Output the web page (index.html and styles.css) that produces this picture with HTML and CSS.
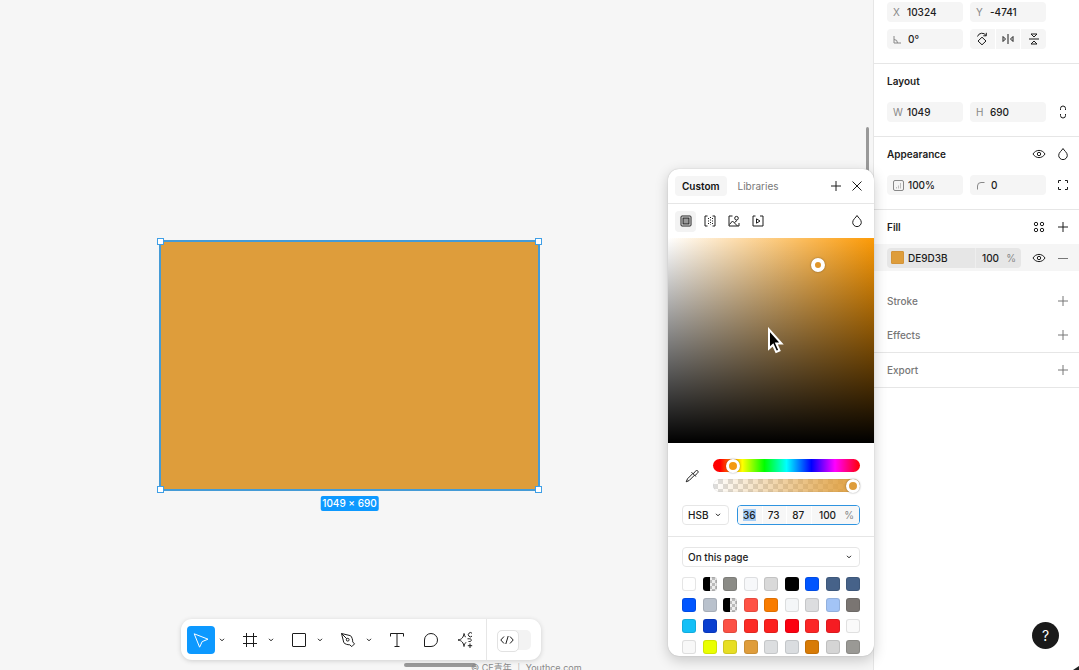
FILE: index.html
```html
<!doctype html>
<html lang="en">
  <head>
    <meta charset="UTF-8" />
    <meta name="viewport" content="width=device-width, initial-scale=1.0" />
    <title>Design Editor</title>
    <link rel="stylesheet" href="styles.css">
  </head>
  <body>
    <main class="canvas">
      <div class="shape">
        <span class="handle tl"></span>
        <span class="handle tr"></span>
        <span class="handle bl"></span>
        <span class="handle br"></span>
        <span class="size-badge">1049 × 690</span>
      </div>

      <div class="scroll-y"></div>
      <div class="scroll-x"></div>
      <p class="credit">© CE青年 ｜ Youthce.com</p>

      <nav class="toolbar" aria-label="Tools">
        <div class="tool-group">
          <button class="tool active" aria-label="Move">
            <svg width="18" height="18" viewBox="0 0 18 18"><path d="M2.2 2.8 16 8.2l-5.800 2.400-2.600 5.600z" /></svg>
          </button>
          <button class="more" aria-label="More move tools"><svg width="6" height="4" viewBox="0 0 6 4"><path d="m1 .8 2 2 2-2" /></svg></button>
        </div>
        <div class="tool-group">
          <button class="tool" aria-label="Frame">
            <svg width="16" height="16" viewBox="0 0 16 16"><path d="M4.500 1v14M11.500 1v14M1 4.500h14M1 11.500h14" /></svg>
          </button>
          <button class="more" aria-label="More frame tools"><svg width="6" height="4" viewBox="0 0 6 4"><path d="m1 .8 2 2 2-2" /></svg></button>
        </div>
        <div class="tool-group">
          <button class="tool" aria-label="Rectangle">
            <svg width="16" height="16" viewBox="0 0 16 16"><rect x="1.500" y="1.500" width="13" height="13" rx=".5" /></svg>
          </button>
          <button class="more" aria-label="More shapes"><svg width="6" height="4" viewBox="0 0 6 4"><path d="m1 .8 2 2 2-2" /></svg></button>
        </div>
        <div class="tool-group">
          <button class="tool" aria-label="Pen">
            <svg width="16" height="16" viewBox="0 0 16 16"><path d="m1.500 1.500 9 2.200c1.600 1.600 2.200 3.800 2.200 6.200l1.800 2-2.700 2.700-2-1.800c-2.400 0-4.600-.6-6-2.200zM1.500 1.500l5.300 5.300" /><circle cx="7.700" cy="7.700" r="1.400" /></svg>
          </button>
          <button class="more" aria-label="More drawing tools"><svg width="6" height="4" viewBox="0 0 6 4"><path d="m1 .8 2 2 2-2" /></svg></button>
        </div>
        <div class="tool-group plain">
          <button class="tool" aria-label="Text">
            <svg width="16" height="16" viewBox="0 0 16 16"><path d="M1.500 4.500v-3h13v3M8 1.500v13M5.500 14.500h5" /></svg>
          </button>
          <button class="tool" aria-label="Comment">
            <svg width="16" height="16" viewBox="0 0 16 16"><path d="M1.500 14.500V8A6.500 6.500 0 1 1 8 14.500z" /></svg>
          </button>
          <button class="tool" aria-label="Actions">
            <svg width="18" height="18" viewBox="0 0 18 18"><path d="M9.500 6.200C8.700 5.200 8.500 4 8 2.500 7.500 6 6 8.500 2 9c4 .5 5.500 3 6 6.500.3-1.800.8-3 2-4.200" /><path d="M16 2.300a2.100 2.100 0 1 0 0 2.800M11.500 7.800h2.300c2 0 2 2.700 0 2.700h-1.300M14 12.500v4.500M11.800 14.700h4.400" /></svg>
          </button>
        </div>
        <label class="dev-mode">
          <input type="checkbox" aria-label="Dev Mode">
          <svg width="14" height="10" viewBox="0 0 14 10"><path d="M4 1.500.8 5 4 8.500M10 1.500 13.200 5 10 8.500M8.200 1 5.800 9" /></svg>
        </label>
      </nav>
    </main>

    <aside class="sidebar">
      <section class="section position">
        <div class="fields">
          <label class="field"><span>X</span><input value="10324" aria-label="X position"></label>
          <label class="field"><span>Y</span><input value="-4741" aria-label="Y position"></label>
        </div>
        <div class="fields">
          <label class="field">
            <svg width="9" height="9" viewBox="0 0 9 9"><path d="M1 1v7h7M1 4.500a3.500 3.500 0 0 1 3.500 3.500" /></svg>
            <input value="0°" aria-label="Rotation">
          </label>
          <div class="button-group">
            <button aria-label="Rotate 90 degrees"><svg width="12" height="14" viewBox="0 0 12 14"><path d="M1.500 4.500a4.700 4.700 0 0 1 8.500-1M10.300.8v3H7.300M6 5.200l4 3.800-4 3.800L2 9z" /></svg></button>
            <button aria-label="Flip horizontal"><svg width="12" height="12" viewBox="0 0 12 12"><path d="M6 1v10M1 3.500v5L3.500 6zM11 3.500v5L8.500 6z" /></svg></button>
            <button aria-label="Flip vertical"><svg width="12" height="12" viewBox="0 0 12 12"><path d="M1 6h10M3 1h6L6 4zM3 11h6L6 8z" /></svg></button>
          </div>
        </div>
      </section>

      <section class="section">
        <header><h2>Layout</h2></header>
        <div class="fields">
          <label class="field"><span>W</span><input value="1049" aria-label="Width"></label>
          <label class="field"><span>H</span><input value="690" aria-label="Height"></label>
          <button class="icon" aria-label="Lock aspect ratio"><svg width="12" height="14" viewBox="0 0 12 14"><path d="M3.500 5V3.500a2.500 2.500 0 0 1 5 0V5M3.500 9v1.500a2.500 2.500 0 0 0 5 0V9" /></svg></button>
        </div>
      </section>

      <section class="section">
        <header>
          <h2>Appearance</h2>
          <button class="icon" aria-label="Toggle visibility"><svg width="14" height="14" viewBox="0 0 14 14"><path d="M1 7c2.800-4.800 9.200-4.800 12 0-2.800 4.800-9.200 4.800-12 0z" /><circle cx="7" cy="7" r="1.700" /></svg></button>
          <button class="icon" aria-label="Blend mode"><svg width="12" height="14" viewBox="0 0 12 14"><path d="M6 1.500C5 3.500 1.700 5.500 1.700 8.300a4.300 4.300 0 0 0 8.600 0C10.300 5.500 7 3.500 6 1.500z" /></svg></button>
        </header>
        <div class="fields">
          <label class="field">
            <svg width="11" height="11" viewBox="0 0 11 11"><rect x=".5" y=".5" width="10" height="10" rx="1.500" /><path d="M3.500 8.500V7M5.500 8.500v-3M7.500 8.500V3" stroke-opacity=".5" /></svg>
            <input value="100%" aria-label="Opacity">
          </label>
          <label class="field">
            <svg width="9" height="9" viewBox="0 0 9 9"><path d="M1.500 8.500V5A3.500 3.500 0 0 1 5 1.500h3.500" /></svg>
            <input value="0" aria-label="Corner radius">
          </label>
          <button class="icon" aria-label="Individual corners"><svg width="12" height="12" viewBox="0 0 12 12"><path d="M1.500 4V1.500H4M8 1.500h2.500V4M10.500 8v2.500H8M4 10.500H1.500V8" /></svg></button>
        </div>
      </section>

      <section class="fill">
        <header>
          <h2>Fill</h2>
          <button class="icon" aria-label="Styles"><svg width="12" height="12" viewBox="0 0 12 12"><circle cx="3" cy="3" r="1.700" /><circle cx="9" cy="3" r="1.700" /><circle cx="3" cy="9" r="1.700" /><circle cx="9" cy="9" r="1.700" /></svg></button>
          <button class="icon" aria-label="Add fill"><svg width="12" height="12" viewBox="0 0 12 12"><path d="M6 1v10M1 6h10" /></svg></button>
        </header>
        <div class="fill-row">
          <div class="paint">
            <button class="chip" aria-label="Fill color"></button>
            <input class="hex" value="DE9D3B" aria-label="Hex">
            <label class="opacity"><input value="100" aria-label="Fill opacity"><span>%</span></label>
          </div>
          <button class="icon" aria-label="Hide fill"><svg width="14" height="14" viewBox="0 0 14 14"><path d="M1 7c2.800-4.800 9.200-4.800 12 0-2.800 4.800-9.200 4.800-12 0z" /><circle cx="7" cy="7" r="1.700" /></svg></button>
          <button class="icon remove" aria-label="Remove fill"><svg width="12" height="12" viewBox="0 0 12 12"><path d="M1 6.500h10" /></svg></button>
        </div>
      </section>

      <section class="empty">
        <h2>Stroke</h2>
        <button class="icon" aria-label="Add stroke"><svg width="12" height="12" viewBox="0 0 12 12"><path d="M6 1v10M1 6h10" /></svg></button>
      </section>
      <section class="empty ruled">
        <h2>Effects</h2>
        <button class="icon" aria-label="Add effect"><svg width="12" height="12" viewBox="0 0 12 12"><path d="M6 1v10M1 6h10" /></svg></button>
      </section>
      <section class="empty ruled">
        <h2>Export</h2>
        <button class="icon" aria-label="Add export"><svg width="12" height="12" viewBox="0 0 12 12"><path d="M6 1v10M1 6h10" /></svg></button>
      </section>

      <button class="help" aria-label="Help">?</button>
      <span class="corner"></span>
    </aside>

    <div class="picker" role="dialog" aria-label="Color picker">
      <header class="picker-head">
        <button class="tab selected">Custom</button>
        <button class="tab">Libraries</button>
        <button class="icon push" aria-label="New style"><svg width="12" height="12" viewBox="0 0 12 12"><path d="M6 1v10M1 6h10" /></svg></button>
        <button class="icon" aria-label="Close"><svg width="12" height="12" viewBox="0 0 12 12"><path d="m1.500 1.500 9 9M10.500 1.500l-9 9" /></svg></button>
      </header>

      <div class="paint-types">
        <button class="type selected" aria-label="Solid"><svg width="12" height="12" viewBox="0 0 12 12"><rect x="1" y="1" width="10" height="10" rx="1" /><rect x="3" y="3" width="6" height="6" fill="#999" /></svg></button>
        <button class="type" aria-label="Gradient"><svg width="12" height="12" viewBox="0 0 12 12"><path d="M3.500 1H1v10h2.500M8.500 1H11v10H8.500" /><path d="M4.500 3v7M6.500 2v8M8.500 3v7" stroke-dasharray="1 1.500" /></svg></button>
        <button class="type" aria-label="Image"><svg width="12" height="12" viewBox="0 0 12 12"><path d="M4.500 1H1v10h10V8M1.500 9.500 4.500 6l5 5M6.500 7.500 9 5.500" /><circle cx="8.500" cy="3.200" r="1.800" /></svg></button>
        <button class="type" aria-label="Video"><svg width="12" height="12" viewBox="0 0 12 12"><path d="M3.500 1H1v10h10V1H8M4.500 3.800 8 6 4.500 8.200z" /></svg></button>
        <button class="icon push" aria-label="Blend mode"><svg width="12" height="14" viewBox="0 0 12 14"><path d="M6 1.500C5 3.500 1.700 5.500 1.700 8.300a4.300 4.300 0 0 0 8.600 0C10.300 5.500 7 3.500 6 1.500z" /></svg></button>
      </div>

      <div class="color-area"><span class="color-point"></span></div>

      <div class="controls">
        <div class="slider-row">
          <button class="dropper" aria-label="Pick color"><svg width="14" height="14" viewBox="0 0 14 14"><path d="M7.800 4.500 2.500 9.800 1.200 12.800l3-1.300 5.300-5.300M6.500 3.200l4.300 4.300M8.300 4.800l2-2.500c.8-1 2-1 2.500-.4s.4 1.700-.5 2.500L10 6.500" /></svg></button>
          <div class="sliders">
            <input class="slider hue" type="range" min="0" max="360" value="36" aria-label="Hue">
            <input class="slider alpha" type="range" min="0" max="100" value="100" aria-label="Opacity">
          </div>
        </div>
        <div class="value-row">
          <div class="select mode">
            <select aria-label="Color model"><option>HSB</option><option>HEX</option><option>RGB</option></select>
            <svg width="6" height="4" viewBox="0 0 6 4"><path d="m1 .8 2 2 2-2" /></svg>
          </div>
          <div class="values">
            <label><input class="highlight" value="36" aria-label="Hue value"></label>
            <label><input value="73" aria-label="Saturation"></label>
            <label><input value="87" aria-label="Brightness"></label>
            <label class="percent"><input value="100" aria-label="Alpha"><span>%</span></label>
          </div>
        </div>
      </div>

      <div class="page-colors">
        <div class="select">
          <select aria-label="Color source"><option>On this page</option></select>
          <svg width="6" height="4" viewBox="0 0 6 4"><path d="m1 .8 2 2 2-2" /></svg>
        </div>
        <div class="swatches"></div>
      </div>
    </div>

    <svg class="cursor" width="18" height="28" viewBox="0 0 18 28"><path d="M2 2.500v19l4-3.500 3.200 7 3.300-1.500-3.200-7h5.200z" /></svg>

    <script>
      const colors = [
        '#ffffff', 'half', '#8b8b86', '#f7f8fa', '#d9d9d9', '#000000', '#0055ff', '#466289', '#466289',
        '#0055ff', '#b9c1cc', 'half', '#ff5245', '#f97c00', '#f4f6f8', '#dcdddf', '#a3c4f6', '#7a7572',
        '#14c0f7', '#0a3fd0', '#fc5145', '#fc2b25', '#fc201e', '#fc0010', '#fc2626', '#f51c22', '#fafafa',
        '#f8f8f8', '#eaff00', '#e7de24', '#df9d3b', '#dcdee0', '#dadde0', '#d87b06', '#d5d5d5', '#9a9995'
      ];

      const swatches = document.querySelector('.swatches');

      colors.forEach((color) => {
        const swatch = document.createElement('button');
        swatch.className = 'swatch';
        if (color === 'half') {
          swatch.classList.add('half');
          swatch.setAttribute('aria-label', 'Black, half opacity');
        } else {
          swatch.style.backgroundColor = color;
          swatch.setAttribute('aria-label', color);
        }
        swatches.appendChild(swatch);
      });
    </script>
  </body>
</html>
```
FILE: styles.css
```css
* {
  margin: 0;
  padding: 0;
  box-sizing: border-box;
}

body {
  display: flex;
  height: 100vh;
  overflow: hidden;
  position: relative;
  font-family: Inter, "Noto Sans CJK SC", sans-serif;
  font-size: 10px;
  font-weight: 500;
  line-height: 16px;
  color: #1c1c1c;
  background: #f6f6f6;
}

button,
input,
select {
  font: inherit;
  color: inherit;
  border: none;
  background: none;
  outline: none;
}

input {
  min-width: 0;
  width: 100%;
}

button {
  display: flex;
  align-items: center;
  justify-content: center;
}

svg {
  display: block;
  flex: none;
  fill: none;
  stroke: currentColor;
}

h2 {
  font-size: 10px;
  font-weight: 600;
  flex: 1;
}

/* Canvas */

.canvas {
  position: relative;
  flex: 1;
  overflow: hidden;
}

.shape {
  position: absolute;
  left: 159px;
  top: 240px;
  width: 381px;
  height: 251px;
  background: #de9d3b;
  border: 2px solid #459bd6;
  border-radius: 2px;
}

.handle {
  position: absolute;
  width: 7px;
  height: 7px;
  background: #fff;
  border: 1px solid #3f9fe6;
}

.tl { left: -4px; top: -4px; }
.tr { right: -4px; top: -4px; }
.bl { left: -4px; bottom: -4px; }
.br { right: -4px; bottom: -4px; }

.size-badge {
  position: absolute;
  top: 254px;
  left: 50%;
  transform: translateX(-50%);
  padding: 0 2px;
  line-height: 15px;
  white-space: nowrap;
  color: #fff;
  background: #0d99ff;
  border-radius: 2px;
}

.scroll-y {
  position: absolute;
  right: 4px;
  top: 127px;
  width: 3px;
  height: 76px;
  background: #999;
  border-radius: 2px;
}

.scroll-x {
  position: absolute;
  left: 404px;
  bottom: 3px;
  width: 72px;
  height: 4px;
  background: #999;
  border-radius: 2px;
}

.credit {
  position: absolute;
  left: 471px;
  bottom: -6px;
  font-size: 9px;
  font-weight: 400;
  color: #888;
  white-space: nowrap;
}

/* Toolbar */

.toolbar {
  position: absolute;
  left: 181px;
  bottom: 10px;
  height: 41px;
  display: flex;
  align-items: center;
  gap: 7px;
  padding-left: 6px;
  background: #fff;
  border-radius: 11px;
  box-shadow: 0 1px 5px rgba(0, 0, 0, 0.16);
}

.tool-group {
  display: flex;
}

.plain {
  gap: 6px;
}

.tool {
  width: 28px;
  height: 28px;
  border-radius: 4px;
}

.tool.active {
  color: #fff;
  background: #0d99ff;
}

.more {
  width: 14px;
  height: 28px;
}

.dev-mode {
  position: relative;
  display: flex;
  align-items: center;
  align-self: stretch;
  padding: 0 10px;
  border-left: 1px solid #e6e6e6;
}

.dev-mode input {
  appearance: none;
  width: 34px;
  height: 20px;
  background: #f3f3f3;
  border-radius: 5px;
}

.dev-mode input::before {
  content: "";
  display: block;
  width: 20px;
  height: 20px;
  background: #fff;
  border: 1px solid #e2e2e2;
  border-radius: 5px;
}

.dev-mode svg {
  position: absolute;
  left: 13px;
}

/* Sidebar */

.sidebar {
  width: 206px;
  background: #fff;
  border-left: 1px solid #e6e6e6;
}

.section {
  padding: 0 6px 14px 13px;
  border-bottom: 1px solid #e6e6e6;
}

.position {
  display: grid;
  gap: 7px;
  padding-top: 2px;
}

.sidebar header {
  display: flex;
  align-items: center;
  gap: 4px;
  height: 34px;
}

.section header {
  margin-bottom: 4px;
}

.fields {
  display: grid;
  grid-template-columns: 1fr 1fr 20px;
  gap: 7px;
}

.field {
  display: flex;
  align-items: center;
  height: 20px;
  background: #f5f5f5;
  border-radius: 4px;
  padding-left: 6px;
}

.field span,
.field svg {
  color: #888;
}

.field span {
  flex: none;
  width: 14px;
  font-weight: 400;
}

.field svg {
  margin-right: 4px;
}

.field svg[width="9"] {
  margin-right: 6px;
}

.icon {
  width: 20px;
  height: 20px;
}

.button-group {
  display: grid;
  grid-template-columns: 1fr 1fr 1fr;
  gap: 1px;
}

.button-group button {
  background: #f5f5f5;
}

.button-group button:first-child {
  border-radius: 4px 0 0 4px;
}

.button-group button:last-child {
  border-radius: 0 4px 4px 0;
}

.fill {
  padding-bottom: 12px;
}

.fill header,
.fill-row,
.empty {
  padding: 0 6px 0 13px;
}

.fill-row {
  display: flex;
  align-items: center;
  gap: 4px;
  height: 27px;
  background: #f5f5f5;
}

.paint {
  display: flex;
  align-items: center;
  flex: 1;
  height: 20px;
  margin-right: 4px;
  padding-left: 4px;
  background: #e6e6e6;
  border-radius: 4px;
}

.chip {
  flex: none;
  width: 13px;
  height: 13px;
  margin-right: 4px;
  background: #de9d3b;
  border: 1px solid #d3943a;
  border-radius: 1px;
}

.hex {
  flex: 1;
}

.opacity {
  display: flex;
  width: 46px;
  height: 20px;
  align-items: center;
  padding: 0 5px 0 6px;
  border-left: 1px solid #eee;
}

.opacity span {
  color: #888;
  font-weight: 400;
}

.remove {
  color: #777;
}

.empty {
  display: flex;
  align-items: center;
  height: 35px;
  color: #777;
}

.empty h2 {
  font-weight: 500;
}

.ruled {
  border-bottom: 1px solid #e6e6e6;
}

.help {
  position: absolute;
  right: 20px;
  bottom: 21px;
  width: 27px;
  height: 27px;
  font-size: 14px;
  font-weight: 400;
  color: #fff;
  background: #1a1a1a;
  border-radius: 50%;
}

.corner {
  position: absolute;
  right: 0;
  bottom: 0;
  border-left: 6px solid transparent;
  border-bottom: 4px solid #222;
}

/* Color picker */

.picker {
  position: absolute;
  top: 169px;
  right: 205px;
  width: 206px;
  overflow: hidden;
  background: #fff;
  border-radius: 11px;
  box-shadow: 0 0 1px rgba(0, 0, 0, 0.3), 0 4px 14px rgba(0, 0, 0, 0.2);
}

.picker-head,
.paint-types {
  display: flex;
  align-items: center;
  height: 35px;
  padding: 0 7px;
}

.picker-head {
  border-bottom: 1px solid #e6e6e6;
}

.paint-types {
  height: 34px;
}

.picker .icon {
  width: 21px;
}

.picker .push {
  margin-left: auto;
}

.tab {
  height: 20px;
  padding: 0 7px;
  margin-right: 4px;
  font-weight: 400;
  color: #777;
  border-radius: 4px;
}

.tab.selected {
  font-weight: 600;
  color: #111;
  background: #f5f5f5;
}

.type {
  width: 21px;
  height: 21px;
  margin-right: 3px;
  border-radius: 4px;
}

.type.selected {
  background: #f3f3f3;
}

.color-area {
  position: relative;
  height: 205px;
  background:
    linear-gradient(to top, #000, transparent),
    linear-gradient(to right, #fff, #fc9a06);
}

.color-point {
  position: absolute;
  left: 73%;
  top: 13%;
  width: 14px;
  height: 14px;
  margin: -7px;
  background: #e0962a;
  border: 4px solid #fff;
  border-radius: 50%;
  box-shadow: 0 0 2px rgba(0, 0, 0, 0.4);
}

.controls {
  display: grid;
  gap: 13px;
  padding: 16px 14px 11px;
  border-bottom: 1px solid #e6e6e6;
}

.slider-row {
  display: flex;
  align-items: center;
  gap: 11px;
}

.dropper {
  width: 20px;
  height: 20px;
}

.sliders {
  flex: 1;
  display: grid;
  gap: 7px;
}

.slider {
  appearance: none;
  display: block;
  height: 13px;
  border-radius: 7px;
}

.hue {
  background: linear-gradient(to right, #f00 5%, #ff0 20%, #0f0 35%, #0ff 50%, #00f 67%, #f0f 83%, #f00);
}

.alpha {
  background:
    linear-gradient(to right, transparent, #de9d3b),
    repeating-conic-gradient(#ddd 0 25%, #fff 0 50%) 0 0 / 10px 10px;
  box-shadow: inset 0 0 1px rgba(0, 0, 0, 0.3);
}

.slider::-webkit-slider-thumb {
  appearance: none;
  width: 14px;
  height: 14px;
  background: #f39a12;
  border: 3px solid #fff;
  border-radius: 50%;
  box-shadow: 0 0 2px rgba(0, 0, 0, 0.4);
}

.alpha::-webkit-slider-thumb {
  background: #de9d3b;
}

.value-row {
  display: flex;
  gap: 8px;
}

.select {
  position: relative;
}

.select select {
  appearance: none;
  display: block;
  width: 100%;
  height: 20px;
  padding-left: 5px;
  border: 1px solid #e6e6e6;
  border-radius: 4px;
}

.select svg {
  position: absolute;
  right: 8px;
  top: 8px;
  pointer-events: none;
}

.mode {
  width: 47px;
}

.values {
  flex: 1;
  display: grid;
  grid-template-columns: 1fr 1fr 1fr 47px;
  gap: 1px;
  height: 20px;
  overflow: hidden;
  border: 1px solid #2f94e0;
  border-radius: 4px;
}

.values label {
  display: flex;
  align-items: center;
  padding-left: 5px;
  background: #f7f7f7;
}

.values .percent {
  padding: 0 5px 0 7px;
}

.percent span {
  color: #888;
  font-weight: 400;
}

.values .highlight {
  width: 13px;
  line-height: 12px;
  background: #a5cdf5;
}

.page-colors {
  padding: 10px 14px 2px;
}

.swatches {
  display: grid;
  grid-template-columns: repeat(9, 14px);
  justify-content: space-between;
  row-gap: 7px;
  margin-top: 10px;
}

.swatch {
  height: 14px;
  border: 1px solid rgba(0, 0, 0, 0.1);
  border-radius: 3px;
}

.half {
  background:
    linear-gradient(to right, #000 50%, transparent 50%) border-box,
    repeating-conic-gradient(#bbb 0 25%, #eee 0 50%) 0 0 / 6px 6px border-box;
}

/* Mouse pointer over the color area */

.cursor {
  position: absolute;
  left: 767px;
  top: 327px;
  fill: #000;
  stroke: #fff;
  stroke-width: 2px;
}
```
